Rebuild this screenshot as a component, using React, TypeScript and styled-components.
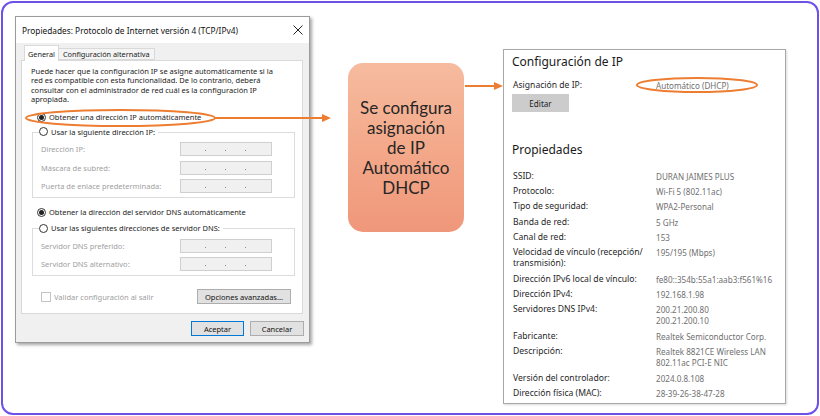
import React from "react";
import styled, { createGlobalStyle } from "styled-components";

const uiFont = `"Noto Sans", "Open Sans", sans-serif`;
const ORANGE = "#ed7d31";

const GlobalStyle = createGlobalStyle`
  html, body { margin: 0; padding: 0; background: #ffffff; }
  body { width: 820px; height: 416px; overflow: hidden; font-family: ${uiFont}; }
  * { box-sizing: border-box; }
`;

const Page = styled.div`
  position: relative;
  width: 820px;
  height: 416px;
  padding: 1px;
`;

const Frame = styled.div`
  width: 818px;
  height: 414px;
  border: 2px solid #6d51e8;
  border-radius: 12px;
  display: flex;
  align-items: flex-start;
  padding: 13px 0 0 12px;
`;

/* ---------- Windows dialog ---------- */
const Dialog = styled.div`
  flex: none;
  width: 295px;
  height: 327px;
  border: 1px solid #9b9b9b;
  background: #f0f0f0;
  box-shadow: 2px 2px 3px rgba(0, 0, 0, 0.35);
  display: flex;
  flex-direction: column;
  font-family: ${uiFont};
  font-size: 7.5px;
  color: #1b1b1b;
`;

const TitleBar = styled.div`
  flex: none;
  height: 26px;
  background: #ffffff;
  display: flex;
  align-items: center;
  justify-content: space-between;
  padding: 0 6px 0 6px;
  font-size: 8.3px;
  color: #111;
`;

const DialogBody = styled.div`
  display: flex;
  flex-direction: column;
  padding: 2px 6px 0 5px;
`;

const TabRow = styled.div`
  display: flex;
  align-items: flex-end;
  height: 15px;
  padding-left: 3px;
  font-size: 7.3px;
`;

const Tab = styled.div<{ $active?: boolean }>`
  position: relative;
  z-index: ${(p) => (p.$active ? 2 : 1)};
  height: ${(p) => (p.$active ? "16px" : "12px")};
  margin-bottom: ${(p) => (p.$active ? "-1px" : "0")};
  padding: 0 ${(p) => (p.$active ? "3px" : "4px")};
  display: flex;
  align-items: center;
  background: ${(p) => (p.$active ? "#ffffff" : "#f4f4f4")};
  border: 1px solid #d9d9d9;
  border-bottom: ${(p) => (p.$active ? "none" : "1px solid #d9d9d9")};
  border-left: ${(p) => (p.$active ? "1px solid #d9d9d9" : "none")};
  white-space: nowrap;
`;

const TabPanel = styled.div`
  height: 254px;
  background: #ffffff;
  border: 1px solid #d9d9d9;
  padding: 6px 7px 0 9px;
  display: flex;
  flex-direction: column;
`;

const Para = styled.p`
  margin: 0;
  line-height: 9.4px;
  white-space: nowrap;
`;

const RadioRow = styled.div<{ $top?: number }>`
  display: flex;
  align-items: center;
  gap: 3px;
  height: 12px;
  margin-left: 6px;
  margin-top: ${(p) => p.$top ?? 0}px;
  white-space: nowrap;
`;

const RadioCircle = styled.span<{ $checked?: boolean }>`
  flex: none;
  width: 9px;
  height: 9px;
  border-radius: 50%;
  border: 1px solid #333;
  background: #fff;
  display: flex;
  align-items: center;
  justify-content: center;
  &::after {
    content: "";
    width: 5px;
    height: 5px;
    border-radius: 50%;
    background: ${(p) => (p.$checked ? "#222" : "transparent")};
  }
`;

const GroupBox = styled.div<{ $top: number }>`
  margin-top: ${(p) => p.$top}px;
  margin-left: 1px;
  width: 263px;
  border: 1px solid #dcdcdc;
  padding: 0 0 4px 8px;
`;

const Legend = styled.div`
  margin-top: -7px;
  margin-left: -2px;
  width: fit-content;
  background: #fff;
  padding-right: 3px;
  display: flex;
  align-items: center;
  gap: 3px;
  height: 12px;
  white-space: nowrap;
`;

const FieldGrid = styled.div`
  display: grid;
  grid-template-columns: 139px 92px;
  grid-auto-rows: 14px;
  row-gap: 4.5px;
  margin-top: 4.5px;
`;

const FieldLabel = styled.span`
  color: #a0a0a0;
  display: flex;
  align-items: center;
  white-space: nowrap;
`;

const IpBox = styled.div`
  border: 1px solid #cfcfcf;
  background: #f0f0f0;
  display: flex;
  align-items: center;
  padding-left: 24px;
  gap: 19px;
`;

const Dot = styled.span`
  width: 1px;
  height: 1px;
  background: #8a8a8a;
  margin-top: 3px;
`;

const CheckRow = styled.div`
  margin-top: 13px;
  height: 15px;
  display: flex;
  align-items: center;
  justify-content: space-between;
  padding: 0 4px 0 10px;
`;

const CheckLabel = styled.span`
  display: flex;
  align-items: center;
  gap: 3px;
  color: #a0a0a0;
  white-space: nowrap;
`;

const CheckBox = styled.span`
  width: 10px;
  height: 10px;
  border: 1px solid #c4c4c4;
  background: #fff;
`;

const WinButton = styled.div<{ $w: number; $default?: boolean }>`
  width: ${(p) => p.$w}px;
  height: 15px;
  display: flex;
  align-items: center;
  justify-content: center;
  background: #e1e1e1;
  border: 1px solid ${(p) => (p.$default ? "#0078d7" : "#adadad")};
  white-space: nowrap;
  color: #111;
`;

const ButtonRow = styled.div`
  display: flex;
  justify-content: flex-end;
  gap: 6px;
  margin-top: 7px;
  margin-right: -1px;
`;

/* ---------- centre callout ---------- */
const Callout = styled.div`
  flex: none;
  margin: 47px 0 0 38px;
  width: 116px;
  height: 169px;
  border-radius: 15px;
  background: linear-gradient(180deg, #f6bb9f 0%, #f3a98a 50%, #f0977a 100%);
  display: flex;
  align-items: center;
  justify-content: center;
  text-align: center;
  font-family: "Lato", "Open Sans", sans-serif;
  font-size: 17px;
  line-height: 20px;
  color: #262626;
`;

/* ---------- right settings panel ---------- */
const SettingsPanel = styled.div`
  flex: none;
  margin: 33px 0 0 39px;
  width: 283px;
  height: 355px;
  border: 1px solid #a8a8a8;
  box-shadow: 1px 1px 2px rgba(0, 0, 0, 0.15);
  background: #fff;
  padding: 4px 0 0 8px;
  font-family: ${uiFont};
  font-size: 8.6px;
  color: #1f1f1f;
  display: flex;
  flex-direction: column;
`;

const Heading = styled.div<{ $top: number }>`
  margin-top: ${(p) => p.$top}px;
  font-size: 12px;
  line-height: 16px;
  color: #1a1a1a;
  white-space: nowrap;
`;

const InfoGrid = styled.div<{ $top: number }>`
  margin-top: ${(p) => p.$top}px;
  display: grid;
  grid-template-columns: 143px 1fr;
  row-gap: 4.1px;
  line-height: 11.2px;
  padding-left: 1px;
`;

const InfoLabel = styled.span`
  color: #1f1f1f;
  white-space: nowrap;
`;

const InfoValue = styled.span`
  color: #707070;
  font-size: 8.1px;
  white-space: nowrap;
`;

const EditButton = styled.div`
  margin-top: 3.5px;
  width: 57px;
  height: 18px;
  background: #cccccc;
  display: flex;
  align-items: center;
  justify-content: center;
  color: #1f1f1f;
  font-size: 8.1px;
`;

const Overlay = styled.svg`
  position: absolute;
  left: 0;
  top: 0;
  pointer-events: none;
`;

const ipFields = ["Dirección IP:", "Máscara de subred:", "Puerta de enlace predeterminada:"];
const dnsFields = ["Servidor DNS preferido:", "Servidor DNS alternativo:"];

const props: [string, string][] = [
  ["SSID:", "DURAN JAIMES PLUS"],
  ["Protocolo:", "Wi-Fi 5 (802.11ac)"],
  ["Tipo de seguridad:", "WPA2-Personal"],
  ["Banda de red:", "5 GHz"],
  ["Canal de red:", "153"],
  ["Velocidad de vínculo (recepción/\ntransmisión):", "195/195 (Mbps)"],
  ["Dirección IPv6 local de vínculo:", "fe80::354b:55a1:aab3:f561%16"],
  ["Dirección IPv4:", "192.168.1.98"],
  ["Servidores DNS IPv4:", "200.21.200.80\n200.21.200.10"],
  ["Fabricante:", "Realtek Semiconductor Corp."],
  ["Descripción:", "Realtek 8821CE Wireless LAN\n802.11ac PCI-E NIC"],
  ["Versión del controlador:", "2024.0.8.108"],
  ["Dirección física (MAC):", "28-39-26-38-47-28"],
];

const Lines = ({ text }: { text: string }) => (
  <>
    {text.split("\n").map((l, i) => (
      <React.Fragment key={i}>
        {i > 0 && <br />}
        {l}
      </React.Fragment>
    ))}
  </>
);

const IpInput = () => (
  <IpBox>
    <Dot />
    <Dot />
    <Dot />
  </IpBox>
);

export default function App() {
  return (
    <Page>
      <GlobalStyle />
      <Frame>
        <Dialog>
          <TitleBar>
            <span>Propiedades: Protocolo de Internet versión 4 (TCP/IPv4)</span>
            <svg width="10" height="10" viewBox="0 0 10 10">
              <path d="M0.5 0.5 L9.5 9.5 M9.5 0.5 L0.5 9.5" stroke="#222" strokeWidth="1" />
            </svg>
          </TitleBar>
          <DialogBody>
            <TabRow>
              <Tab $active>General</Tab>
              <Tab>Configuración alternativa</Tab>
            </TabRow>
            <TabPanel>
              <Para>
                Puede hacer que la configuración IP se asigne automáticamente si la
                <br />
                red es compatible con esta funcionalidad. De lo contrario, deberá
                <br />
                consultar con el administrador de red cuál es la configuración IP
                <br />
                apropiada.
              </Para>
              <RadioRow $top={6.4}>
                <RadioCircle $checked />
                Obtener una dirección IP automáticamente
              </RadioRow>
              <GroupBox $top={8.6}>
                <Legend>
                  <RadioCircle />
                  Usar la siguiente dirección IP:
                </Legend>
                <FieldGrid>
                  {ipFields.map((f) => (
                    <React.Fragment key={f}>
                      <FieldLabel>{f}</FieldLabel>
                      <IpInput />
                    </React.Fragment>
                  ))}
                </FieldGrid>
              </GroupBox>
              <RadioRow $top={8}>
                <RadioCircle $checked />
                Obtener la dirección del servidor DNS automáticamente
              </RadioRow>
              <GroupBox $top={10}>
                <Legend>
                  <RadioCircle />
                  Usar las siguientes direcciones de servidor DNS:
                </Legend>
                <FieldGrid>
                  {dnsFields.map((f) => (
                    <React.Fragment key={f}>
                      <FieldLabel>{f}</FieldLabel>
                      <IpInput />
                    </React.Fragment>
                  ))}
                </FieldGrid>
              </GroupBox>
              <CheckRow>
                <CheckLabel>
                  <CheckBox />
                  Validar configuración al salir
                </CheckLabel>
                <WinButton $w={94}>Opciones avanzadas...</WinButton>
              </CheckRow>
            </TabPanel>
            <ButtonRow>
              <WinButton $w={53} $default>
                Aceptar
              </WinButton>
              <WinButton $w={54}>Cancelar</WinButton>
            </ButtonRow>
          </DialogBody>
        </Dialog>

        <Callout>
          Se configura
          <br />
          asignación
          <br />
          de IP
          <br />
          Automático
          <br />
          DHCP
        </Callout>

        <SettingsPanel>
          <Heading $top={0}>Configuración de IP</Heading>
          <InfoGrid $top={9.5}>
            <InfoLabel>Asignación de IP:</InfoLabel>
            <InfoValue>Automático (DHCP)</InfoValue>
          </InfoGrid>
          <EditButton>Editar</EditButton>
          <Heading $top={30}>Propiedades</Heading>
          <InfoGrid $top={12.5}>
            {props.map(([k, v]) => (
              <React.Fragment key={k}>
                <InfoLabel>
                  <Lines text={k} />
                </InfoLabel>
                <InfoValue>
                  <Lines text={v} />
                </InfoValue>
              </React.Fragment>
            ))}
          </InfoGrid>
        </SettingsPanel>
      </Frame>

      <Overlay width="820" height="416" viewBox="0 0 820 416">
        <g stroke={ORANGE} strokeWidth="2" fill="none">
          <ellipse cx="120.5" cy="118" rx="94.5" ry="8" />
          <line x1="215" y1="118" x2="323" y2="118" />
          <line x1="465" y1="86" x2="495" y2="86" />
          <ellipse cx="697" cy="85" rx="60" ry="7" />
        </g>
        <g fill={ORANGE}>
          <polygon points="322,114 331,118 322,122" />
          <polygon points="494,82 503,86 494,90" />
        </g>
      </Overlay>
    </Page>
  );
}
